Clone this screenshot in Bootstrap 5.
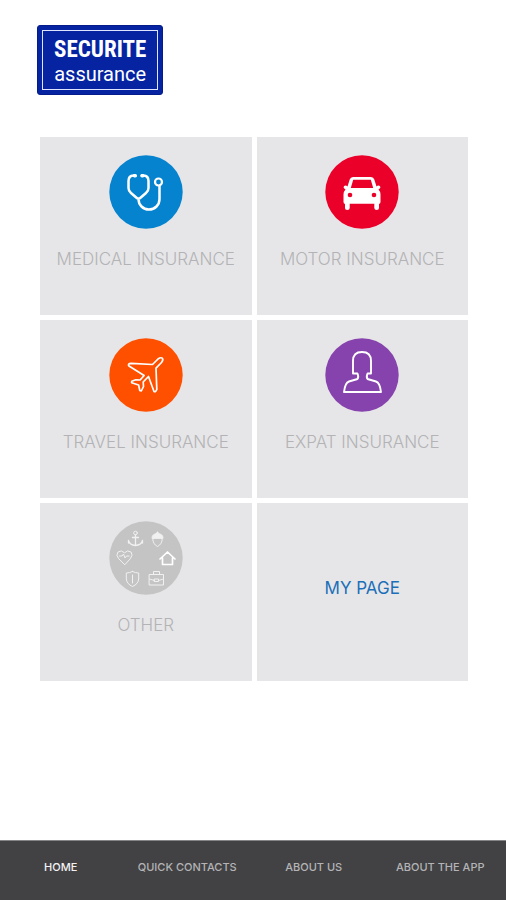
<!DOCTYPE html>
<html lang="en">
<head>
<meta charset="utf-8">
<meta name="viewport" content="width=device-width, initial-scale=1">
<title>Securite Assurance</title>
<link href="https://cdn.jsdelivr.net/npm/bootstrap@5.3.0/dist/css/bootstrap.min.css" rel="stylesheet">
<style>
body { font-family: Inter, "Liberation Sans", sans-serif; background: #fff; }
.app-head { padding: 25px 37px 0; }
.brand-box { background: #0624a2; border: 1px solid #041b8a; border-radius: 3px; padding: 4px; color: #fff; }
.brand-frame { border: 1px solid #dfe5ff; padding: 5px 11px 3px; text-align: center; }
.brand-top { font: 700 23px/27px "Roboto Condensed", "Liberation Sans Narrow", Roboto, sans-serif; }
.brand-sub { font: 400 20px/23px Roboto, sans-serif; }
.app-main { padding: 42px 38px 40px 40px; }
.tiles { display: grid; grid-template-columns: 1fr 1fr; gap: 5px; }
.tile { min-height: 178px; padding-top: 18px; background: #e6e6e8; color: #b3b3b5; font-size: 17px; font-weight: 300; line-height: 24px; text-decoration: none; }
.tile svg { width: 74px; height: 74px; margin-bottom: 18px; }
.tile-page { color: #1b6fb8; font-weight: 400; padding: 0 0 8px; }
.app-foot { background: #424244; border-top: 1px solid #858588; }
.app-foot a { color: #b4b4b6; font-size: 11px; line-height: 20px; font-weight: 500; padding: 16px 5px 23px 0; text-decoration: none; white-space: nowrap; }
.app-foot a.active { color: #f2f2f2; }
</style>
<script src="https://cdn.jsdelivr.net/npm/bootstrap@5.3.0/dist/js/bootstrap.bundle.min.js" defer></script>
</head>
<body class="d-flex flex-column min-vh-100">
<header class="app-head d-flex">
  <div class="brand-box"><div class="brand-frame">
    <div class="brand-top">SECURITE</div>
    <div class="brand-sub">assurance</div>
  </div></div>
</header>
<main class="app-main flex-grow-1">
  <div class="tiles">
    <a href="#" class="tile d-flex flex-column align-items-center">
      <svg viewBox="0 0 74 74" fill="none" stroke="#fff" stroke-linecap="round" stroke-linejoin="round" aria-hidden="true">
        <circle cx="37" cy="37" r="36.7" fill="#0683cf" stroke="none"/>
        <path stroke-width="2.5" d="M26 20.500h-1.500Q19.500 20.800 19.500 26v7q0 3 2.500 5l5.500 4.800q2 1.700 4 0L37 38q2.500-2 2.500-5v-7q0-5.200-5-5.500H33M29.500 44c0 6 4.500 10.500 10.500 10.500S50.500 50 50.500 44V31"/>
        <path stroke-width="3.600" d="M25.500 20.800h.8M33.800 20.800H33"/>
        <circle cx="49.500" cy="27" r="3.500" stroke-width="2.200"/>
      </svg>MEDICAL INSURANCE</a>
    <a href="#" class="tile d-flex flex-column align-items-center">
      <svg viewBox="0 0 74 74" aria-hidden="true">
        <circle cx="37" cy="37" r="36.700" fill="#eb0029"/>
        <path fill="#fff" fill-rule="evenodd" d="M28 22h18q2.500 0 3.300 2.500l2.200 7 1-.8q1.500-.7 2.500.5t-.3 2.300l-1.200 1q2 2 2 5V47q0 1.500-1.500 2v4q0 2-2.300 2t-2.400-2v-4.300H24.700V53q0 2-2.400 2T20 53v-4q-1.500-.5-1.500-2v-7.500q0-3 2-5l-1.200-1q-1.300-1.100-.3-2.300t2.500-.5l1 .8 2.200-7Q25.500 22 28 22zm.2 2.700L25.800 33h22.400l-2.400-8.300z"/>
        <circle cx="25" cy="40" r="2.300" fill="#eb0029"/><circle cx="49" cy="40" r="2.300" fill="#eb0029"/>
      </svg>MOTOR INSURANCE</a>
    <a href="#" class="tile d-flex flex-column align-items-center">
      <svg viewBox="0 0 74 74" aria-hidden="true">
        <circle cx="37" cy="37" r="36.700" fill="#ff5000"/>
        <path fill="none" stroke="#fff" stroke-width="1.700" stroke-linejoin="round" d="M43.500 26.500L49 21q2.800-2 4.300-.8 1.300 1.500-.8 4.300L47 30.200l.8 21.300q-1.300 3-2.800 2l-5.500-15-5.300 5.500.3 4.500-2.200 4.500-1.500-.5-1.200-5.500-7-2.300.2-1.500 4-1.400 4.300.2 4-4.500L20 28q-1.200-1.200.3-2.300l2-.4z"/>
      </svg>TRAVEL INSURANCE</a>
    <a href="#" class="tile d-flex flex-column align-items-center">
      <svg viewBox="0 0 74 74" aria-hidden="true">
        <circle cx="37" cy="37" r="36.700" fill="#8743ad"/>
        <path fill="none" stroke="#fff" stroke-width="1.900" stroke-linejoin="round" d="M32.500 35.500q1.500 3.500 0 5.500l-8.500 2.500q-4 1.500-5 10.500h37q-1-9-5-10.500L42.500 41q-1.500-2 0-5.500h3.500V23q0-9-9-9t-9 9v12.500z"/>
      </svg>EXPAT INSURANCE</a>
    <a href="#" class="tile d-flex flex-column align-items-center">
      <svg viewBox="0 0 74 74" fill="none" stroke="#f1f1f2" stroke-linecap="round" stroke-linejoin="round" aria-hidden="true">
        <circle cx="37" cy="37" r="36.700" fill="#c4c4c5" stroke="none"/>
        <circle cx="26.500" cy="12" r="1.800"/>
        <path stroke-width="1.300" d="M26.500 14v10M23.500 16.500h6M19.500 19.500q1 4.500 7 5 6-.5 7-5M19.500 19.500v2.500M33.500 19.500v2.500"/>
        <path fill="#f1f1f2" d="M43 17q0-4 5-4.500v-1.500h1v1.500q5 .5 5 4.500z"/>
        <path d="M43.800 18q0 5 4.700 7.500 4.700-2.500 4.700-7.500"/>
        <path d="M15.500 43.500l-6-6q-3-3.500-.5-6.500 3.500-2.500 6.500.8 3-3.300 6.500-.8 2.500 3-.5 6.500zM10.500 35h2.500l1.500-2 1.500 4 1.500-2h2.500"/>
        <path stroke="#fff" stroke-width="1.700" d="M51 38l7.500-7 7.500 7M53.500 37v6.500h10V37"/>
        <path d="M23.500 50.500q3 1.500 6.200 1.500v6q-.5 5-6.200 7.500-5.700-2.500-6.200-7.500v-6q3.200 0 6.200-1.500zM23.500 54v8"/>
        <path d="M40.500 53.500h14V64h-14zM44.500 53v-2.500h6V53M40.500 58l5 1.500M54.500 58l-5 1.500M45.500 58h4v2.500h-4z"/>
      </svg>OTHER</a>
    <a href="#" class="tile tile-page d-flex align-items-center justify-content-center">MY PAGE</a>
  </div>
</main>
<footer class="app-foot">
  <nav class="row g-0 text-center" aria-label="Main">
    <a href="#" class="col-3 active" aria-current="page">HOME</a>
    <a href="#" class="col-3">QUICK CONTACTS</a>
    <a href="#" class="col-3">ABOUT US</a>
    <a href="#" class="col-3">ABOUT THE APP</a>
  </nav>
</footer>
</body>
</html>
